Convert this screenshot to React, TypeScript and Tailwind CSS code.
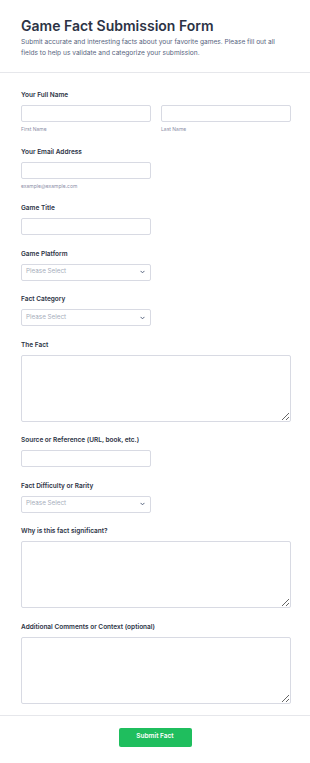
import React from 'react';

function Label({ children }: { children: React.ReactNode }) {
  return (
    <label className="block h-[10px] text-[6.5px] font-semibold leading-[10px] text-[#2c3345]">
      {children}
    </label>
  );
}

function Sublabel({ children }: { children: React.ReactNode }) {
  return <p className="mt-[3px] h-[8px] text-[5px] leading-[8px] text-[#8d8fa8]">{children}</p>;
}

function TextInput({ className = '' }: { className?: string }) {
  return (
    <input
      type="text"
      className={`block h-[17px] rounded-[2px] border border-[#d8dae3] bg-white outline-none ${className}`}
    />
  );
}

function SelectBox() {
  return (
    <div className="flex h-[17px] w-[130px] items-center justify-between rounded-[2px] border border-[#d8dae3] bg-white pl-[4px] pr-[5px]">
      <span className="text-[6.3px] text-[#a6adbb]">Please Select</span>
      <svg width="5" height="4" viewBox="0 0 6 4" fill="none">
        <path d="M1 1l2 2 2-2" stroke="#57647e" strokeWidth="1.2" strokeLinecap="round" strokeLinejoin="round" />
      </svg>
    </div>
  );
}

function Area() {
  return (
    <textarea className="block h-[67px] w-full resize-y rounded-[2px] border border-[#d8dae3] bg-white outline-none" />
  );
}

function Field({ label, children }: { label: React.ReactNode; children: React.ReactNode }) {
  return (
    <div className="pb-[13.5px]">
      <Label>{label}</Label>
      <div className="mt-[5px]">{children}</div>
    </div>
  );
}

export default function App() {
  return (
    <div className="min-h-[763px] bg-white font-['Inter',sans-serif]">
      <header className="border-b border-[#e6e7eb] px-[21px] pb-[13px] pt-[17px]">
        <h1 className="text-[14px] font-semibold leading-[18px] text-[#2c3345]">Game Fact Submission Form</h1>
        <p className="mt-[2px] max-w-[262px] text-[6.6px] leading-[11px] text-[#57647e]">
          Submit accurate and interesting facts about your favorite games. Please fill out all fields to help us
          validate and categorize your submission.
        </p>
      </header>

      <form className="border-b border-[#e6e7eb] pl-[21px] pr-[19px] pt-[17px]">
        <Field label="Your Full Name">
          <div className="flex gap-[10px]">
            <div className="flex-1">
              <TextInput className="w-full" />
              <Sublabel>First Name</Sublabel>
            </div>
            <div className="flex-1">
              <TextInput className="w-full" />
              <Sublabel>Last Name</Sublabel>
            </div>
          </div>
        </Field>

        <Field label="Your Email Address">
          <TextInput className="w-[130px]" />
          <Sublabel>example@example.com</Sublabel>
        </Field>

        <Field label="Game Title">
          <TextInput className="w-[130px]" />
        </Field>

        <Field label="Game Platform">
          <SelectBox />
        </Field>

        <Field label="Fact Category">
          <SelectBox />
        </Field>

        <Field label="The Fact">
          <Area />
        </Field>

        <Field label="Source or Reference (URL, book, etc.)">
          <TextInput className="w-[130px]" />
        </Field>

        <Field label="Fact Difficulty or Rarity">
          <SelectBox />
        </Field>

        <Field label="Why is this fact significant?">
          <Area />
        </Field>

        <div className="pb-[11px]">
          <Label>Additional Comments or Context (optional)</Label>
          <div className="mt-[5px]">
            <Area />
          </div>
        </div>
      </form>

      <div className="flex justify-center pt-[12px]">
        <button
          type="button"
          className="h-[19px] w-[73px] rounded-[2px] bg-[#1fbe5e] text-[6.5px] font-semibold text-white"
        >
          Submit Fact
        </button>
      </div>
    </div>
  );
}
